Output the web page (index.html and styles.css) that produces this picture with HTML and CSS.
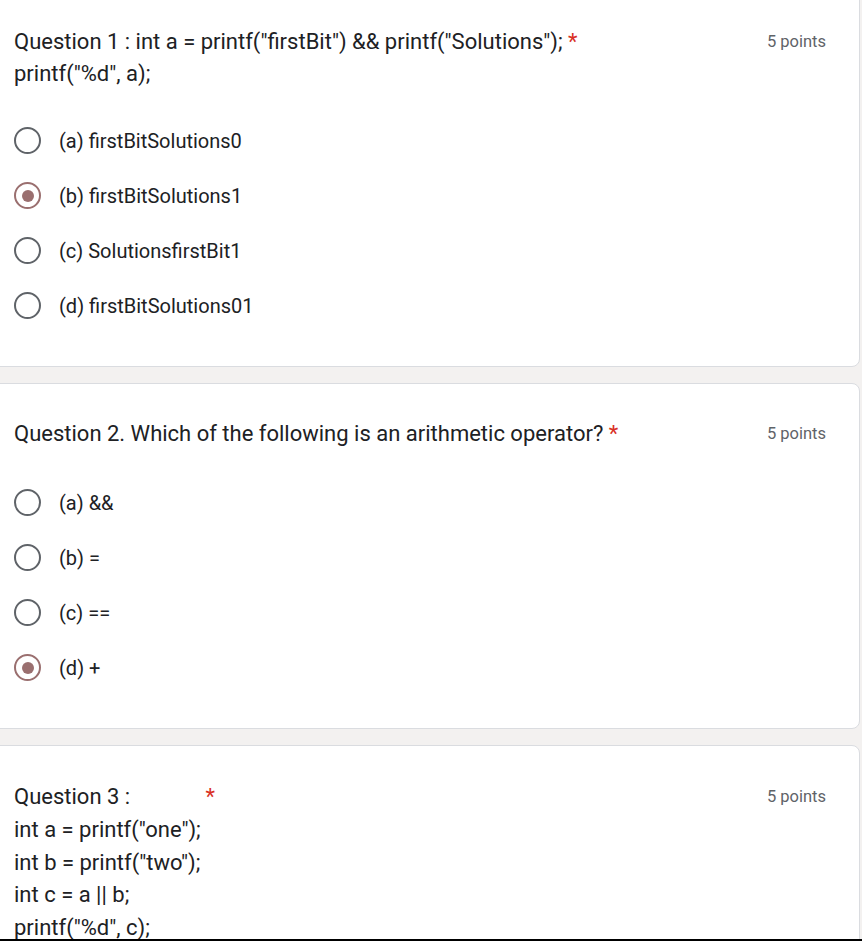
FILE: index.html
```html
<!DOCTYPE html>
<html>
<head>
<meta charset="utf-8">
<link rel="stylesheet" href="styles.css">
</head>
<body>
<div class="page">
  <section class="card card-first">
    <div class="head">
      <div class="title">Question 1 : int a = printf("firstBit") &amp;&amp; printf("Solutions"); <span class="req">*</span><br>printf("%d", a);</div>
      <div class="points">5 points</div>
    </div>
    <div class="options">
      <div class="opt"><span class="radio"></span><span class="label">(a) firstBitSolutions0</span></div>
      <div class="opt"><span class="radio checked"></span><span class="label">(b) firstBitSolutions1</span></div>
      <div class="opt"><span class="radio"></span><span class="label">(c) SolutionsfirstBit1</span></div>
      <div class="opt"><span class="radio"></span><span class="label">(d) firstBitSolutions01</span></div>
    </div>
  </section>
  <section class="card card-second">
    <div class="head">
      <div class="title">Question 2. Which of the following is an arithmetic operator? <span class="req">*</span></div>
      <div class="points">5 points</div>
    </div>
    <div class="options options-wide">
      <div class="opt"><span class="radio"></span><span class="label">(a) &amp;&amp;</span></div>
      <div class="opt"><span class="radio"></span><span class="label">(b) =</span></div>
      <div class="opt"><span class="radio"></span><span class="label">(c) ==</span></div>
      <div class="opt"><span class="radio checked"></span><span class="label">(d) +</span></div>
    </div>
  </section>
  <section class="card card-last">
    <div class="head">
      <div class="title code">Question 3 : <span class="req req-far">*</span><br>int a = printf("one");<br>int b = printf("two");<br>int c = a || b;<br>printf("%d", c);</div>
      <div class="points">5 points</div>
    </div>
  </section>
</div>
<div class="bottom-line"></div>
</body>
</html>
```
FILE: styles.css
```css
html, body {
  margin: 0;
  padding: 0;
}
body {
  background: #f3f1f0;
  font-family: Roboto, "Liberation Sans", Arial, sans-serif;
  color: #202124;
  overflow: hidden;
  height: 941px;
}
.page {
  display: flex;
  flex-direction: column;
  gap: 16px;
  margin-left: -10px;
  width: 870px;
}
.card {
  background: #ffffff;
  border: 1px solid #dadce0;
  border-radius: 8px;
  padding: 34px 33px 33px 23px;
}
.card-first {
  margin-top: -10px;
  padding-top: 35px;
}
.card-second {
  padding-bottom: 33px;
}
.card-last {
  padding-top: 35px;
  padding-bottom: 60px;
}
.head {
  display: flex;
  justify-content: space-between;
  align-items: flex-start;
}
.title {
  font-size: 22px;
  line-height: 32px;
}
.title.code {
  line-height: 32.75px;
}
.req {
  color: #d93025;
}
.req-far {
  margin-left: 70px;
}
.points {
  font-size: 16.5px;
  line-height: 32px;
  color: #5f6368;
  white-space: nowrap;
}
.options {
  display: flex;
  flex-direction: column;
  margin-top: 23px;
}
.options-wide {
  margin-top: 25px;
}
.opt {
  display: flex;
  align-items: center;
  height: 55px;
}
.radio {
  box-sizing: border-box;
  width: 27px;
  height: 27px;
  border: 2px solid #5f6368;
  border-radius: 50%;
  margin-left: 0;
  margin-right: 18px;
  display: flex;
  align-items: center;
  justify-content: center;
  flex-shrink: 0;
}
.radio.checked {
  border-color: #9a6f6f;
}
.radio.checked::after {
  content: "";
  width: 12px;
  height: 12px;
  border-radius: 50%;
  background: #9a6f6f;
}
.label {
  font-size: 20px;
}
.bottom-line {
  position: fixed;
  left: 0;
  right: 0;
  bottom: 0;
  height: 2px;
  background: #000000;
}
```
